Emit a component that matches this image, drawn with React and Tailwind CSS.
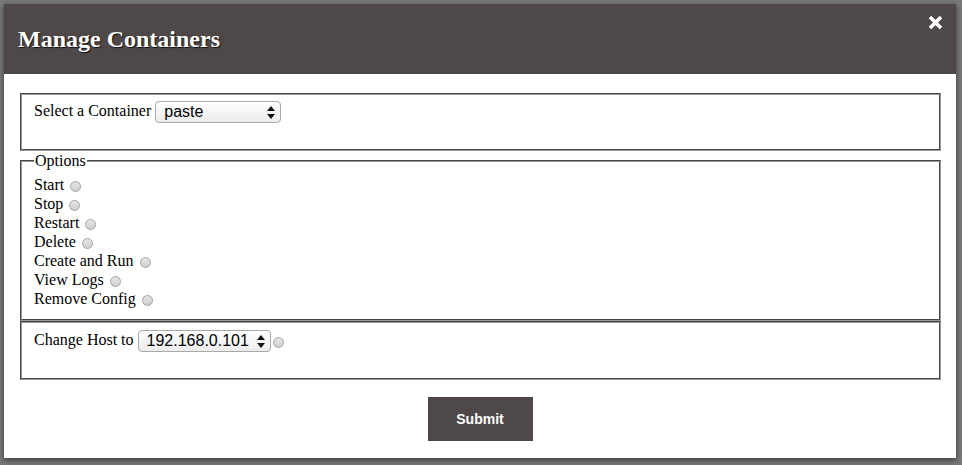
import React from "react";

const options = ["Start", "Stop", "Restart", "Delete", "Create and Run", "View Logs", "Remove Config"];

function Radio() {
  return (
    <span className="inline-block w-[11px] h-[11px] ml-[6px] rounded-full border border-[#a3a3a3] bg-gradient-to-b from-[#e6e6e6] to-[#cfcfcf] align-[-2px]"></span>
  );
}

function FakeSelect({ value, width }) {
  return (
    <span
      className={`inline-flex items-center justify-between h-[22px] ${width} pl-[8px] pr-[5px] rounded-[4px] border border-[#a9a9a9] bg-gradient-to-b from-white to-[#ececec] align-middle text-[16px] text-black leading-none`}
      style={{ fontFamily: '"Liberation Sans", Arial, sans-serif' }}
    >
      <span>{value}</span>
      <svg width="8" height="13" viewBox="0 0 8 13">
        <path d="M4 0 L8 5 L0 5 Z" fill="#111" />
        <path d="M4 13 L8 8 L0 8 Z" fill="#111" />
      </svg>
    </span>
  );
}

export default function App() {
  return (
    <div className="w-[962px] h-[465px] bg-[#797979] pt-[4px] pl-[4px] overflow-hidden">
      <div
        className="w-[952px] h-[454px] bg-white flex flex-col shadow-[0_2px_6px_rgba(0,0,0,0.55)]"
        style={{ fontFamily: '"Liberation Serif", "Times New Roman", serif' }}
      >
        {/* header */}
        <div className="h-[70px] bg-[#4e4848] flex items-center justify-between pl-[14px] pr-[13px] shrink-0">
          <h1 className="text-[24px] font-bold text-white -mt-[1px] [text-shadow:1px_1px_1px_rgba(0,0,0,0.8)]">
            Manage Containers
          </h1>
          <svg width="15" height="15" viewBox="0 0 15 15" className="self-start mt-[11px]">
            <path d="M2 2 L13 13 M13 2 L2 13" stroke="#fff" strokeWidth="3.6" />
          </svg>
        </div>

        {/* body */}
        <div className="pt-[19px] pl-[16px] pr-[15px] flex flex-col text-[16px] text-black">
          <div className="h-[58px] border-2 [border-style:groove] border-[#9a9a9a] pt-[6px] px-[12px] leading-[19px]">
            Select a Container <FakeSelect value="paste" width="w-[126px]" />
          </div>

          <fieldset className="mt-[1px] h-[169px] border-2 [border-style:groove] border-[#9a9a9a] px-[12px]">
            <legend className="px-[1px] leading-[18px]">Options</legend>
            <div className="flex flex-col pt-[5px]">
              {options.map((o) => (
                <div key={o} className="leading-[19px]">
                  {o}
                  <Radio />
                </div>
              ))}
            </div>
          </fieldset>

          <div className="h-[59px] border-2 [border-style:groove] border-[#9a9a9a] pt-[7px] px-[12px] leading-[19px]">
            Change Host to <FakeSelect value="192.168.0.101" width="w-[133px]" />
            <span className="inline-block w-[11px] h-[11px] ml-[2px] rounded-full border border-[#a3a3a3] bg-gradient-to-b from-[#e6e6e6] to-[#cfcfcf] align-[-3px]"></span>
          </div>
        </div>

        <div className="flex justify-center pt-[17px]">
          <button
            className="w-[105px] h-[44px] bg-[#4e4848] text-white text-[14px] font-bold"
            style={{ fontFamily: '"Liberation Sans", Arial, sans-serif' }}
          >
            Submit
          </button>
        </div>
      </div>
    </div>
  );
}
